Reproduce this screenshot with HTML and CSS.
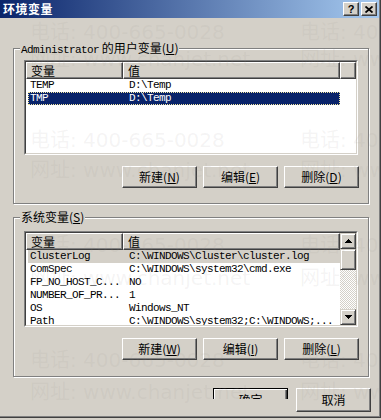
FILE: index.html
```html
<!DOCTYPE html>
<html lang="zh-CN">
<head>
    <meta charset="UTF-8">
    <title>环境变量</title>
    <link rel="stylesheet" href="styles.css">
</head>
<body>
<div class="dialog">
    <div class="titlebar">
        <span class="title">环境变量</span>
        <div class="caption-btns">
            <span class="cbtn">?</span>
            <span class="cbtn">
                <svg width="8" height="7" viewBox="0 0 8 7"><path d="M0.5 0.5 L7.5 6.5 M7.5 0.5 L0.5 6.5" stroke="#000" stroke-width="1.8"/></svg>
            </span>
        </div>
    </div>

    <div class="content">
        <fieldset class="group group-user">
            <legend><span class="mono">Administrator</span> 的用户变量(<u>U</u>)</legend>
            <div class="list list-user">
                <div class="list-in">
                    <div class="lv-head">
                        <span class="hcell c1">变量</span><span class="hcell c2">值</span><span class="hcell c3"></span>
                    </div>
                    <div class="lv-row"><span class="c1">TEMP</span><span class="c2">D:\Temp</span></div>
                    <div class="lv-row selected"><span class="c1">TMP</span><span class="c2">D:\Temp</span></div>
                </div>
            </div>
            <div class="btn-row">
                <button class="btn">新建(<u>N</u>)</button>
                <button class="btn">编辑(<u>E</u>)</button>
                <button class="btn">删除(<u>D</u>)</button>
            </div>
        </fieldset>

        <fieldset class="group group-sys">
            <legend>系统变量(<u>S</u>)</legend>
            <div class="list list-sys">
                <div class="list-in list-flex">
                    <div class="lv-main">
                        <div class="lv-head">
                            <span class="hcell c1">变量</span><span class="hcell c2">值</span>
                        </div>
                        <div class="lv-row inactive"><span class="c1">ClusterLog</span><span class="c2">C:\WINDOWS\Cluster\cluster.log</span></div>
                        <div class="lv-row"><span class="c1">ComSpec</span><span class="c2">C:\WINDOWS\system32\cmd.exe</span></div>
                        <div class="lv-row"><span class="c1">FP_NO_HOST_C...</span><span class="c2">NO</span></div>
                        <div class="lv-row"><span class="c1">NUMBER_OF_PR...</span><span class="c2">1</span></div>
                        <div class="lv-row"><span class="c1">OS</span><span class="c2">Windows_NT</span></div>
                        <div class="lv-row"><span class="c1">Path</span><span class="c2">C:\WINDOWS\system32;C:\WINDOWS;...</span></div>
                    </div>
                    <div class="scrollbar">
                        <div class="sb-btn"><svg width="7" height="4" viewBox="0 0 7 4" shape-rendering="crispEdges"><path d="M3 0h1v1h1v1h1v1h1v1H0V3h1V2h1V1h1z"/></svg></div>
                        <div class="sb-thumb"></div>
                        <div class="sb-track"></div>
                        <div class="sb-btn"><svg width="7" height="4" viewBox="0 0 7 4" shape-rendering="crispEdges"><path d="M0 0h7v1H6v1H5v1H4v1H3V3H2V2H1V1H0z"/></svg></div>
                    </div>
                </div>
            </div>
            <div class="btn-row">
                <button class="btn">新建(<u>W</u>)</button>
                <button class="btn">编辑(<u>I</u>)</button>
                <button class="btn">删除(<u>L</u>)</button>
            </div>
        </fieldset>

        <div class="dlg-btns">
            <div class="ok-clip"><button class="btn btn-default">确定</button></div>
            <button class="btn">取消</button>
        </div>
    </div>

    <!-- watermark of the source site -->
    <div class="watermark">
        <div class="wm r1"><span>电话: 400-665-0028</span><span>电话: 400-665-0028</span></div>
        <div class="wm r2"><span>网址: www.chanjet.net</span><span>网址: www.chanjet.net</span></div>
        <div class="wm r3"><span>电话: 400-665-0028</span><span>电话: 400-665-0028</span></div>
        <div class="wm r4"><span>网址: www.chanjet.net</span><span>网址: www.chanjet.net</span></div>
        <div class="wm r5"><span>电话: 400-665-0028</span><span>电话: 400-665-0028</span></div>
        <div class="wm r6"><span>网址: www.chanjet.net</span><span>网址: www.chanjet.net</span></div>
        <div class="wm r7"><span>电话: 400-665-0028</span><span>电话: 400-665-0028</span></div>
        <div class="wm r8"><span>网址: www.chanjet.net</span><span>网址: www.chanjet.net</span></div>
    </div>
</div>
</body>
</html>
```

FILE: styles.css
```css
body { margin: 0; background: #d4d0c8; font-family: "Noto Sans CJK SC", "Liberation Sans", sans-serif; font-size: 12px; color: #000; }
u { text-decoration: underline; }
.mono { font-family: "Liberation Mono", monospace; font-size: 11px; letter-spacing: -0.6px; }

.dialog { position: relative; width: 381px; height: 418px; box-sizing: border-box; padding-right: 1px; background: #d4d0c8;
  border-right: 1px solid #404040; border-bottom: 1px solid #404040; box-shadow: inset -1px -1px #808080; overflow: hidden; }

.titlebar { height: 18px; display: flex; align-items: center; justify-content: space-between; padding: 0 2px 0 3px;
  background: linear-gradient(to right, #0a246a, #a6caf0); }
.title { color: #fff; font-weight: bold; font-size: 12px; line-height: 18px; letter-spacing: 0.5px; }
.caption-btns { display: flex; gap: 2px; }
.cbtn { width: 16px; height: 14px; box-sizing: border-box; display: flex; align-items: center; justify-content: center;
  background: #d4d0c8; border: 1px solid; border-color: #fff #404040 #404040 #fff; box-shadow: inset -1px -1px #808080;
  font: bold 11px "Liberation Sans", sans-serif; }

.content { padding: 23px 10px 0 13px; }

.group { margin: 0; width: 356px; min-width: 0; box-sizing: border-box; border: 1px solid #808080;
  box-shadow: 1px 1px 0 #fff, inset 1px 1px 0 #fff; padding: 5px 9px 15px 10px; }
.group legend { padding: 0 1px; margin-left: -4px; background: #d4d0c8; height: 14px; line-height: 14px; }
.group-sys { margin-top: 6px; padding-top: 7px; padding-bottom: 16px; }

.list { width: 334px; box-sizing: border-box; border: 1px solid; border-color: #808080 #fff #fff #808080; }
.list-user { height: 95px; }
.list-sys { height: 96px; }
.list-in { height: 100%; box-sizing: border-box; border: 1px solid; border-color: #404040 #d4d0c8 #d4d0c8 #404040; background: #fff; overflow: hidden; }
.list-flex { display: flex; }
.lv-main { flex: 1; overflow: hidden; }

.lv-head { display: flex; height: 17px; }
.hcell { height: 17px; box-sizing: border-box; padding-left: 4px; line-height: 15px; background: #d4d0c8;
  border: 1px solid; border-color: #fff #404040 #404040 #fff; box-shadow: inset -1px -1px #808080; }
.hcell.c1 { width: 97px; }
.hcell.c2 { width: 217px; }
.hcell.c3 { flex: 1; }

.lv-row { display: flex; height: 13px; line-height: 13px; width: 312px; margin-left: 2px; white-space: nowrap;
  font-family: "Liberation Mono", monospace; font-size: 11px; letter-spacing: -0.6px; }
.lv-row .c1 { width: 95px; padding-left: 2px; box-sizing: border-box; overflow: hidden; }
.lv-row .c2 { flex: 1; padding-left: 6px; overflow: hidden; }
.lv-row.selected { background: #0a246a; color: #fff; outline: 1px dotted #f4e8a0; outline-offset: -1px; }
.lv-row.inactive { background: #d4d0c8; }

.scrollbar { width: 16px; display: flex; flex-direction: column; }
.sb-btn, .sb-thumb { box-sizing: border-box; background: #d4d0c8; border: 1px solid; border-color: #d4d0c8 #404040 #404040 #d4d0c8;
  box-shadow: inset 1px 1px #fff, inset -1px -1px #808080; }
.sb-btn { height: 16px; display: flex; align-items: center; justify-content: center; }
.sb-thumb { height: 21px; }
.sb-track { flex: 1; background: conic-gradient(#fff 25%, #d4d0c8 0 50%, #fff 0 75%, #d4d0c8 0); background-size: 2px 2px; }

.btn-row { display: flex; justify-content: flex-end; gap: 6px; margin-top: 11px; }
.btn { width: 75px; height: 22px; box-sizing: border-box; padding: 0; background: #d4d0c8; color: #000;
  font: 12px "Noto Sans CJK SC", sans-serif; line-height: 18px;
  border: 1px solid; border-color: #fff #404040 #404040 #fff; box-shadow: inset -1px -1px #808080; }

.dlg-btns { display: flex; justify-content: flex-end; gap: 8px; margin: 11px -2px 0 0; }
.ok-clip { height: 11px; overflow: hidden; }
.btn-default { height: 24px; border-color: #000; box-shadow: inset 1px 1px #fff, inset -1px -1px #404040, inset -2px -2px #808080; }
.dlg-btns .btn { height: 24px; }

.watermark { position: absolute; inset: 0; pointer-events: none; color: rgba(150, 148, 144, 0.1);
  font: 20px "DejaVu Sans", "Noto Sans CJK SC", sans-serif; }
.wm { position: absolute; left: 30px; display: flex; white-space: nowrap; line-height: 24px; }
.wm span { width: 270px; flex: none; }
.r1 { top: 20px; }
.r2 { top: 47px; }
.r3 { top: 128px; }
.r4 { top: 158px; }
.r5 { top: 233px; }
.r6 { top: 266px; }
.r7 { top: 348px; }
.r8 { top: 380px; }
```
